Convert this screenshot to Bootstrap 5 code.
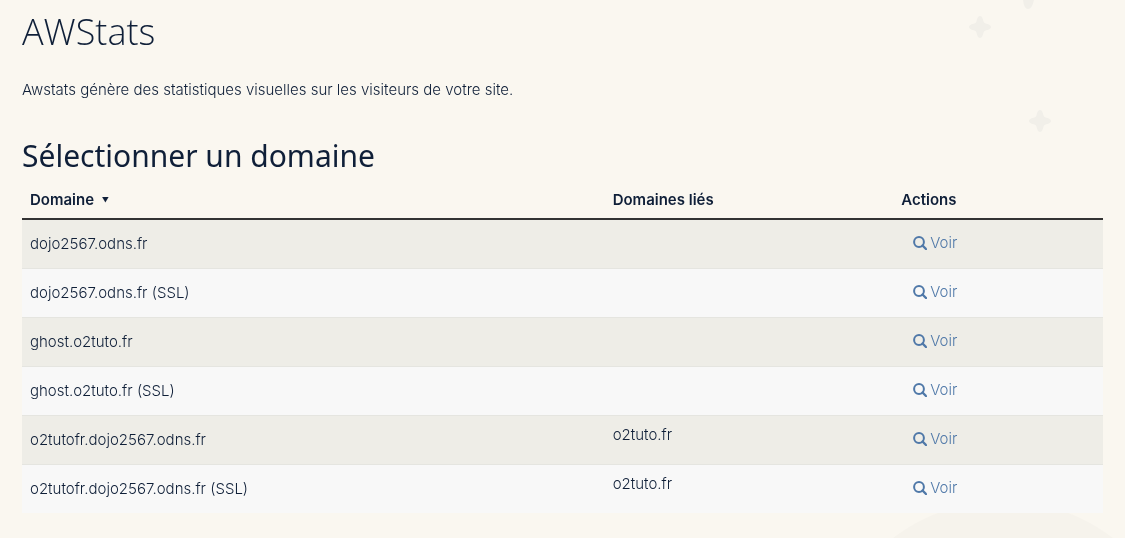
<!DOCTYPE html>
<html lang="fr">
<head>
<meta charset="utf-8">
<meta name="viewport" content="width=device-width, initial-scale=1">
<title>AWStats</title>
<link href="https://cdn.jsdelivr.net/npm/bootstrap@5.3.0/dist/css/bootstrap.min.css" rel="stylesheet">
<style>
  body { background: #faf7f0; color: #0f1f38; font-family: Inter, "Noto Sans", sans-serif; font-size: 15px; font-weight: 300; line-height: 20px; }
  .page { padding: 8px 22px 0; }
  h1 { font-family: "Open Sans", "Noto Sans", sans-serif; font-weight: 300; font-size: 36px; line-height: 48px; margin-bottom: 24px; }
  h2 { font-family: "Noto Sans", "Open Sans", sans-serif; font-weight: 400; font-size: 30px; line-height: 40px; margin: 36px 0 4px; }
  .domains { color: inherit; --bs-table-bg: transparent; --bs-table-color: #0f1f38; table-layout: fixed; }
  .domains th { font-weight: 600; line-height: 20px; padding: 10px 8px 8px; border-bottom: 2px solid #333; }
  .domains td { height: 49px; padding: 0 8px; border: 0; border-top: 1px solid #e5e5e0; vertical-align: middle; }
  .domains tbody tr:first-child td { border-top: 0; }
  .domains tbody tr:nth-child(odd) td { background: #eeede7; }
  .domains tbody tr:nth-child(even) td { background: #f8f8f8; }
  .domains td.linked { vertical-align: top; padding-top: 9px; }
  .domain-col { width: 53.9%; }
  .linked-col { width: 26.7%; }
  .sort { font-size: 7px; line-height: 1; margin-left: 4px; vertical-align: 2px; }
  .view-link { color: #4f78a8; padding-left: 12px; gap: 3px; }
  .decor { z-index: -1; pointer-events: none; }
</style>
</head>
<body>
<svg class="decor position-fixed top-0 end-0" width="185" height="150" fill="#f1efe9" aria-hidden="true">
  <defs><path id="star" d="M0-11C2-11 3-8 3.500-5.500Q4-4 5.500-3.500C8-3 11-2 11 0S8 3 5.500 3.500Q4 4 3.500 5.500C3 8 2 11 0 11S-3 8-3.500 5.500Q-4 4-5.500 3.500C-8 3-11 2-11 0S-8-3-5.500-3.500Q-4-4-3.500-5.500C-3-8-2-11 0-11Z"/></defs>
  <use href="#star" x="40" y="27"/>
  <use href="#star" x="100" y="121"/>
  <path d="M83 0H94Q92 9 88 9T83 0Z"/>
</svg>
<svg class="decor position-fixed bottom-0 end-0" width="304" height="37" aria-hidden="true"><circle cx="182" cy="182" r="182" fill="#f6f3ec"/></svg>

<main class="page">
  <h1>AWStats</h1>
  <p class="mb-0">Awstats génère des statistiques visuelles sur les visiteurs de votre site.</p>
  <h2>Sélectionner un domaine</h2>
  <table class="table domains mb-0">
    <thead>
      <tr><th class="domain-col" scope="col" aria-sort="descending">Domaine <span class="sort">▼</span></th><th class="linked-col" scope="col">Domaines liés</th><th scope="col">Actions</th></tr>
    </thead>
    <tbody id="rows"></tbody>
  </table>
</main>

<template id="row">
  <tr>
    <td class="name"></td>
    <td class="linked"></td>
    <td><a href="#" class="view-link d-inline-flex align-items-center text-decoration-none"><svg width="14" height="14" viewBox="0 0 14 14" fill="none" stroke="currentColor" aria-hidden="true"><circle cx="6" cy="6" r="4.900" stroke-width="2"/><path d="M9.500 9.500L13 13" stroke-width="2.400" stroke-linecap="round"/></svg><span>Voir</span></a></td>
  </tr>
</template>
<script>
  const domains = [
    ['dojo2567.odns.fr', ''],
    ['dojo2567.odns.fr (SSL)', ''],
    ['ghost.o2tuto.fr', ''],
    ['ghost.o2tuto.fr (SSL)', ''],
    ['o2tutofr.dojo2567.odns.fr', 'o2tuto.fr'],
    ['o2tutofr.dojo2567.odns.fr (SSL)', 'o2tuto.fr']
  ];
  const template = document.getElementById('row');
  for (const [name, linked] of domains) {
    const row = template.content.cloneNode(true);
    row.querySelector('.name').textContent = name;
    row.querySelector('.linked').textContent = linked;
    document.getElementById('rows').append(row);
  }
</script>
<script src="https://cdn.jsdelivr.net/npm/bootstrap@5.3.0/dist/js/bootstrap.bundle.min.js"></script>
</body>
</html>
